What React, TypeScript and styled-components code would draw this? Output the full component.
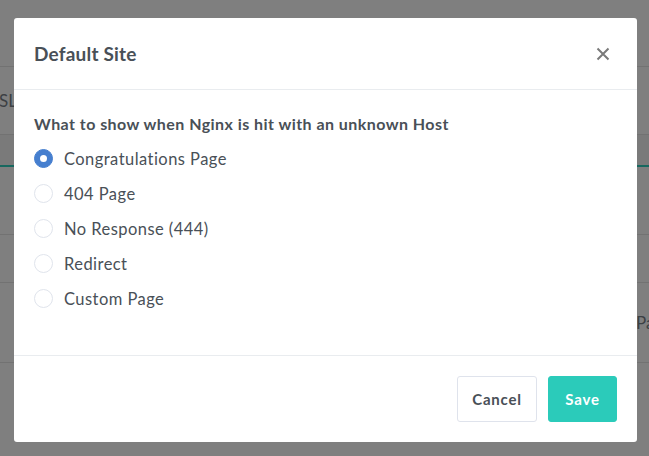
import React, { useState } from "react";
import styled, { createGlobalStyle } from "styled-components";

const Global = createGlobalStyle`
  html, body { margin: 0; padding: 0; }
  body {
    width: 649px; height: 456px; overflow: hidden;
    font-family: Lato, "Open Sans", "Liberation Sans", sans-serif;
    background: #7f7f7f;
  }
  * { box-sizing: border-box; }
`;

const Page = styled.div`
  position: relative;
  width: 649px;
  height: 456px;
  background: #7f7f7f;
  overflow: hidden;
`;

const BgRow = styled.div<{ $h: number; $bg?: string; $accent?: boolean }>`
  height: ${(p) => p.$h}px;
  background: ${(p) => p.$bg || "#7f7f7f"};
  border-bottom: ${(p) => (p.$accent ? "2px solid #17685f" : "1px solid #727272")};
  display: flex;
  align-items: center;
  color: #3c4044;
  font-size: 17px;
  overflow: hidden;
`;

const BgText = styled.span<{ $left: number }>`
  margin-left: ${(p) => p.$left}px;
  white-space: nowrap;
`;

const Overlay = styled.div`
  position: absolute;
  inset: 0;
`;

const Modal = styled.div`
  position: absolute;
  left: 14px;
  top: 18px;
  width: 623px;
  height: 424px;
  background: #fff;
  border-radius: 3px;
  display: flex;
  flex-direction: column;
  color: #495057;
`;

const Header = styled.div`
  height: 72px;
  padding: 0 20px;
  border-bottom: 1px solid #e9ecef;
  display: flex;
  align-items: center;
  justify-content: space-between;
`;

const Title = styled.h5`
  margin: 0;
  font-size: 19px;
  font-weight: 700;
  letter-spacing: 0.2px;
  color: #495057;
`;

const Close = styled.button`
  border: 0;
  background: none;
  padding: 0;
  width: 16px;
  height: 16px;
  margin-right: 6px;
  display: flex;
  align-items: center;
  justify-content: center;
  cursor: pointer;
`;

const Body = styled.div`
  flex: 1;
  padding: 24px 20px 0;
`;

const Label = styled.div`
  font-size: 16px;
  font-weight: 700;
  letter-spacing: 0.45px;
  line-height: 20px;
  margin-bottom: 7px;
  color: #495057;
`;

const Option = styled.label`
  height: 35px;
  display: flex;
  align-items: center;
  gap: 11px;
  font-size: 16.5px;
  letter-spacing: 0.45px;
  color: #495057;
  cursor: pointer;
`;

const Circle = styled.span<{ $on: boolean }>`
  width: 19px;
  height: 19px;
  border-radius: 50%;
  border: 1px solid ${(p) => (p.$on ? "#467fcf" : "#e0e4ec")};
  background: ${(p) => (p.$on ? "#467fcf" : "#fff")};
  display: flex;
  align-items: center;
  justify-content: center;
  flex: none;
  &::after {
    content: "";
    width: 7px;
    height: 7px;
    border-radius: 50%;
    background: #fff;
    display: ${(p) => (p.$on ? "block" : "none")};
  }
`;

const Footer = styled.div`
  height: 87px;
  border-top: 1px solid #e9ecef;
  display: flex;
  align-items: center;
  justify-content: flex-end;
  gap: 11px;
  padding: 0 20px;
`;

const Button = styled.button<{ $primary?: boolean }>`
  height: 46px;
  width: ${(p) => (p.$primary ? 69 : 80)}px;
  padding: 0;
  border-radius: 3px;
  font-family: inherit;
  font-size: 15px;
  font-weight: 700;
  letter-spacing: 0.8px;
  border: 1px solid ${(p) => (p.$primary ? "#2bcbba" : "#dfe3ec")};
  background: ${(p) => (p.$primary ? "#2bcbba" : "#fff")};
  color: ${(p) => (p.$primary ? "#fff" : "#495057")};
  cursor: pointer;
`;

const options = [
  "Congratulations Page",
  "404 Page",
  "No Response (444)",
  "Redirect",
  "Custom Page",
];

export default function App() {
  const [sel, setSel] = useState(0);
  return (
    <Page>
      <Global />
      <BgRow $h={67} />
      <BgRow $h={68}>
        <BgText $left={-1}>SL</BgText>
      </BgRow>
      <BgRow $h={32} $bg="#7a7a7a" $accent />
      <BgRow $h={68} />
      <BgRow $h={48} />
      <BgRow $h={80}>
        <BgText $left={636}>Pa</BgText>
      </BgRow>
      <Overlay>
        <Modal>
          <Header>
            <Title>Default Site</Title>
            <Close aria-label="Close">
              <svg width="14" height="14" viewBox="0 0 14 14">
                <path d="M1.5 1.5 L12.5 12.5 M12.5 1.5 L1.5 12.5" stroke="#7a7a7a" strokeWidth="2" />
              </svg>
            </Close>
          </Header>
          <Body>
            <Label>What to show when Nginx is hit with an unknown Host</Label>
            {options.map((o, i) => (
              <Option key={o} onClick={() => setSel(i)}>
                <Circle $on={sel === i} />
                {o}
              </Option>
            ))}
          </Body>
          <Footer>
            <Button>Cancel</Button>
            <Button $primary>Save</Button>
          </Footer>
        </Modal>
      </Overlay>
    </Page>
  );
}
